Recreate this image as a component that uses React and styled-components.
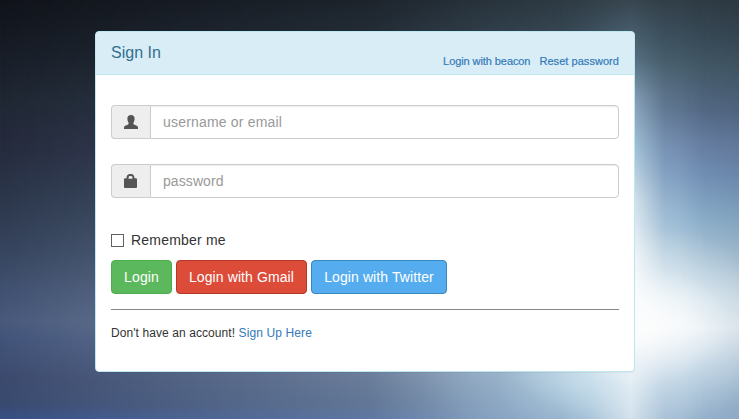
import React from "react";
import styled, { createGlobalStyle } from "styled-components";

const GlobalStyle = createGlobalStyle`
  * { box-sizing: border-box; }
  body { margin: 0; }
`;

const Page = styled.main`
  position: relative;
  isolation: isolate;
  height: 419px;
  padding-top: 31px;
  padding-left: 95px;
  overflow: hidden;
  font-family: "Liberation Sans", Arial, sans-serif;
  font-size: 14px;
  line-height: 20px;
  color: #333;
  background: linear-gradient(#10131a 0, #171c26 50px, #1f2733 100px, #262b3e 150px, #2c374b 200px, #36445d 250px, #405070 290px, #48597b 322px, #42547a 336px, #3b496d 380px, #394a70 405px, #384f86 419px);
`;

const Daylight = styled.div`
  position: absolute;
  inset: 0;
  z-index: -3;
  background: linear-gradient(#303d46 0, #3a4d5a 40px, #465c6b 70px, #556b88 110px, #677fa3 140px, #7493b9 175px, #8bafcc 215px, #b0cadc 260px, #d5e6ef 300px, #e8f1f6 328px, #bcd3e4 365px, #a4c0d6 395px, #9ab5cf 419px);
  mask-image: linear-gradient(90deg, transparent, rgba(0,0,0,0.12) 15%, rgba(0,0,0,0.4) 50%, rgba(0,0,0,0.72) 64%, #000 80%, #000 92%, rgba(0,0,0,0.88));
`;

const LightColumn = styled.div`
  position: absolute;
  inset: 0 auto 0 560px;
  z-index: -2;
  width: 145px;
  background: linear-gradient(#37464f 0, #455a69 28px, #587284 60px, #8aa5bb 100px, #a9c9dc 150px, #dbe7ee 200px, #f7f9fa 260px, #fdfdfd 330px, #f3f8fa 380px, #e4eef3 419px);
  mask-image: linear-gradient(90deg, transparent, rgba(0,0,0,0.22) 20%, rgba(0,0,0,0.75) 39%, #000 49%, rgba(0,0,0,0.7) 57%, rgba(0,0,0,0.22) 72%, transparent);
`;

const Flare = styled.div`
  position: absolute;
  inset: 0;
  z-index: -1;
  background:
    radial-gradient(ellipse 150px 100px at 640px 327px, #fdfdfd 0%, rgba(253,253,253,0.7) 25%, rgba(245,250,252,0.25) 60%, rgba(240,248,252,0) 100%),
    radial-gradient(ellipse 150px 90px at 575px 385px, rgba(185,218,234,0.5) 0%, rgba(150,180,210,0.25) 55%, rgba(140,160,205,0) 100%);
`;

const Panel = styled.section`
  width: 540px;
  height: 341px;
  border: 1px solid #bce8f1;
  border-radius: 4px;
  background: #fff;
  box-shadow: 0 1px 1px rgba(0,0,0,0.05);
`;

const PanelHeading = styled.header`
  display: flex;
  justify-content: space-between;
  height: 43px;
  padding: 12px 15px 0;
  border-bottom: 1px solid #bce8f1;
  border-radius: 3px 3px 0 0;
  background: #d9edf7;
`;

const Title = styled.h1`
  margin: 0;
  font-size: 16px;
  font-weight: 400;
  line-height: 18px;
  color: #31708f;
`;

const Links = styled.nav`
  display: flex;
  gap: 9px;
  padding-top: 10px;
  font-size: 11px;
  line-height: 14px;
  -webkit-text-stroke: 0.2px #337ab7;
`;

const Link = styled.a`
  color: #337ab7;
  text-decoration: none;
  letter-spacing: ${({ $tracking = 0 }) => $tracking}px;
`;

const Form = styled.form`
  padding: 30px 15px 0;
`;

const InputGroup = styled.div`
  display: flex;
  height: 34px;
  margin-bottom: 25px;
`;

const Addon = styled.span`
  display: flex;
  align-items: center;
  justify-content: center;
  width: 39px;
  border: 1px solid #ccc;
  border-right: 0;
  border-radius: 4px 0 0 4px;
  background: #eee;
`;

const Icon = styled.svg`
  display: block;
  width: 14px;
  height: 14px;
  fill: #555;
`;

const Input = styled.input`
  flex: 1;
  min-width: 0;
  padding: 6px 12px;
  border: 1px solid #ccc;
  border-radius: 0 4px 4px 0;
  background: #fff;
  box-shadow: inset 0 1px 1px rgba(0,0,0,0.075);
  font: inherit;
  letter-spacing: ${({ $tracking }) => $tracking}px;
  color: #555;
  outline: 0;
  &::placeholder { color: #999; opacity: 1; }
`;

const Remember = styled.label`
  display: flex;
  align-items: center;
  gap: 7px;
  width: max-content;
  margin-top: 32px;
  letter-spacing: 0.2px;
`;

const Checkbox = styled.input`
  appearance: none;
  width: 13px;
  height: 13px;
  margin: 1px 0 0;
  border: 1px solid #606060;
  background: #fff;
`;

const Actions = styled.div`
  display: flex;
  gap: 4px;
  margin-top: 10px;
`;

const variants = {
  success: ["#5cb85c", "#4cae4c"],
  gmail: ["#dd4b39", "#b23829"],
  twitter: ["#55acee", "#3b88c0"],
};

const Button = styled.button`
  width: ${({ $width }) => $width}px;
  height: 34px;
  padding: 0;
  border: 1px solid ${({ $variant }) => variants[$variant][1]};
  border-radius: 4px;
  background: ${({ $variant }) => variants[$variant][0]};
  font: inherit;
  letter-spacing: 0.1px;
  color: #fff;
  white-space: nowrap;
`;

const SignUp = styled.footer`
  margin-top: 15px;
  padding-top: 15px;
  border-top: 1px solid #888;
  font-size: 12px;
  line-height: 17px;
  letter-spacing: 0.08px;
`;

function UserIcon() {
  return (
    <Icon viewBox="0 0 14 14" aria-hidden="true">
      <path d="M7 0C4.7 0 3.4 1.4 3.4 3.5C3.4 5 3.8 6.6 4.6 7.7V8.6C4.6 9.1 4.3 9.4 3.6 9.7L1.2 10.7C.4 11.1 0 11.6 0 12.4V14H14V12.4C14 11.6 13.6 11.1 12.8 10.7L10.4 9.7C9.7 9.4 9.4 9.1 9.4 8.6V7.7C10.2 6.6 10.6 5 10.6 3.5C10.6 1.4 9.3 0 7 0Z" />
    </Icon>
  );
}

function LockIcon() {
  return (
    <Icon viewBox="0 0 14 14" aria-hidden="true">
      <path fillRule="evenodd" d="M2.6 4.3V3.4C2.6 1.3 4 0 5.8 0H7.2C9 0 10.4 1.3 10.4 3.4V4.3H12Q13 4.3 13 5.3V13Q13 14 12 14H1Q0 14 0 13V5.3Q0 4.3 1 4.3ZM4.6 4.7H8.4V3.5Q8.4 2 7.2 2H5.8Q4.6 2 4.6 3.5Z" />
    </Icon>
  );
}

export default function App() {
  return (
    <>
      <GlobalStyle />
      <Page>
        <Daylight />
        <LightColumn />
        <Flare />
        <Panel>
          <PanelHeading>
            <Title>Sign In</Title>
            <Links>
              <Link href="#" $tracking={-0.08}>Login with beacon</Link>
              <Link href="#" $tracking={0.05}>Reset password</Link>
            </Links>
          </PanelHeading>
          <Form onSubmit={(event) => event.preventDefault()}>
            <InputGroup>
              <Addon><UserIcon /></Addon>
              <Input type="text" placeholder="username or email" $tracking={0.19} />
            </InputGroup>
            <InputGroup>
              <Addon><LockIcon /></Addon>
              <Input type="password" placeholder="password" $tracking={0.08} />
            </InputGroup>
            <Remember><Checkbox type="checkbox" />Remember me</Remember>
            <Actions>
              <Button type="submit" $variant="success" $width={61}>Login</Button>
              <Button type="button" $variant="gmail" $width={131}>Login with Gmail</Button>
              <Button type="button" $variant="twitter" $width={136}>Login with Twitter</Button>
            </Actions>
            <SignUp>Don't have an account! <Link href="#" $tracking={0.12}>Sign Up Here</Link></SignUp>
          </Form>
        </Panel>
      </Page>
    </>
  );
}
